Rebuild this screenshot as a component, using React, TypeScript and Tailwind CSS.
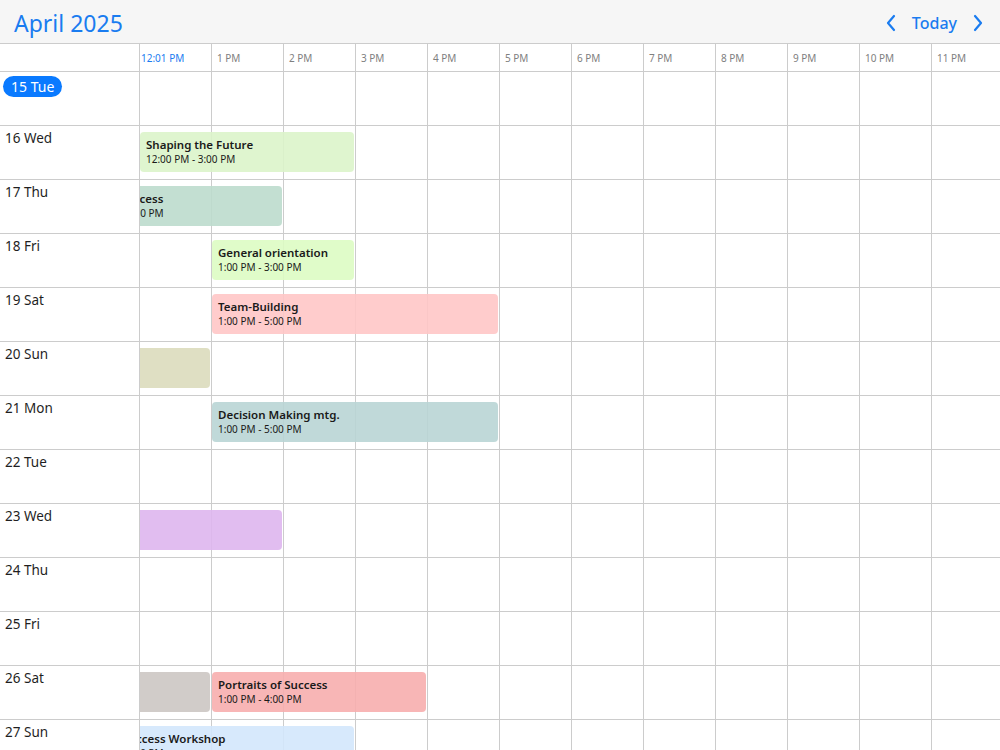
import React from 'react'

type Ev = {
  day: number
  start: number
  end: number
  title?: string
  time?: string
  color: string
}

const HOUR = 72
const GRID_START = 12 // grid scrolled so that 12 PM sits at the left edge

const hours = ['', '1 PM', '2 PM', '3 PM', '4 PM', '5 PM', '6 PM', '7 PM', '8 PM', '9 PM', '10 PM', '11 PM']

const days = [
  { n: 15, d: 'Tue' },
  { n: 16, d: 'Wed' },
  { n: 17, d: 'Thu' },
  { n: 18, d: 'Fri' },
  { n: 19, d: 'Sat' },
  { n: 20, d: 'Sun' },
  { n: 21, d: 'Mon' },
  { n: 22, d: 'Tue' },
  { n: 23, d: 'Wed' },
  { n: 24, d: 'Thu' },
  { n: 25, d: 'Fri' },
  { n: 26, d: 'Sat' },
  { n: 27, d: 'Sun' },
]

// events that start before noon are scrolled out to the left, so only their tail shows
const events: Ev[] = [
  { day: 16, start: 12, end: 15, title: 'Shaping the Future', time: '12:00 PM - 3:00 PM', color: 'bg-[#dcf4ca]/90' },
  { day: 17, start: 11, end: 14, title: 'Road to Success', time: '11:00 AM - 2:00 PM', color: 'bg-[#bddbcd]/90' },
  { day: 18, start: 13, end: 15, title: 'General orientation', time: '1:00 PM - 3:00 PM', color: 'bg-[#ddfcc3]/90' },
  { day: 19, start: 13, end: 17, title: 'Team-Building', time: '1:00 PM - 5:00 PM', color: 'bg-[#ffc7c7]/90' },
  { day: 20, start: 10, end: 13, color: 'bg-[#dcdcbd]/90' },
  { day: 21, start: 13, end: 17, title: 'Decision Making mtg.', time: '1:00 PM - 5:00 PM', color: 'bg-[#b9d5d5]/90' },
  { day: 23, start: 9, end: 14, color: 'bg-[#deb6ee]/90' },
  { day: 26, start: 10, end: 13, color: 'bg-[#ccc7c3]/90' },
  { day: 26, start: 13, end: 16, title: 'Portraits of Success', time: '1:00 PM - 4:00 PM', color: 'bg-[#f7aeae]/90' },
  { day: 27, start: 11, end: 15, title: 'Steps to Success Workshop', time: '11:00 AM - 3:00 PM', color: 'bg-[#d3e7fc]/90' },
]

const Chevron = ({ dir }: { dir: 'left' | 'right' }) => (
  <svg width="12" height="18" viewBox="0 0 12 18" fill="none" stroke="#1a7cf0" strokeWidth="2.2" strokeLinecap="round" strokeLinejoin="round">
    {dir === 'left' ? <polyline points="9,2 3,9 9,16" /> : <polyline points="3,2 9,9 3,16" />}
  </svg>
)

const App = () => {
  return (
    <div
      className="w-[1000px] h-[750px] overflow-hidden flex flex-col bg-white text-[#1f1f1f]"
      style={{ fontFamily: '"Noto Sans", "Open Sans", sans-serif' }}
    >
      {/* header */}
      <div className="h-[44px] shrink-0 flex items-center justify-between bg-[#f6f6f6] border-b border-[#cccccc] pl-[14px] pr-[16px]">
        <h1 className="text-[23px] leading-none text-[#1a7cf0] pt-[4px]">April 2025</h1>
        <div className="flex items-center gap-[15px] pt-[2px]">
          <Chevron dir="left" />
          <span className="text-[16px] font-medium text-[#1a7cf0]">Today</span>
          <Chevron dir="right" />
        </div>
      </div>

      {/* hour labels */}
      <div className="h-[28px] shrink-0 flex border-b border-[#cccccc]">
        <div className="w-[140px] shrink-0 border-r border-[#cccccc]" />
        {hours.map((h, i) => (
          <div key={i} className="w-[72px] shrink-0 border-r border-[#cccccc] pl-[5px] pt-[7px] text-[10px] text-[#808080] whitespace-nowrap">
            {i === 0 ? <span className="text-[#1a7cf0] ml-[-4px]">12:01 PM</span> : h}
          </div>
        ))}
      </div>

      {/* day rows */}
      {days.map((day) => (
        <div key={day.n} className="h-[54px] shrink-0 flex border-b border-[#cccccc]">
          <div className="w-[140px] shrink-0 border-r border-[#cccccc] pt-[2px] pl-[3px]">
            {day.n === 15 ? (
              <span className="inline-flex items-center h-[21px] px-[8px] rounded-full bg-[#0a7aff] text-white text-[14px]">
                {day.n} {day.d}
              </span>
            ) : (
              <div className="pl-[2px] text-[13.5px] leading-[20px]">
                {day.n} {day.d}
              </div>
            )}
          </div>
          <div className="relative flex-1 flex overflow-hidden">
            {hours.map((_, i) => (
              <div key={i} className="w-[72px] shrink-0 border-r border-[#cccccc]" />
            ))}
            {events
              .filter((e) => e.day === day.n)
              .map((e, i) => (
                <div
                  key={i}
                  className={`absolute top-[6px] h-[40px] rounded-[4px] pl-[6px] pt-[5px] overflow-hidden whitespace-nowrap ${e.color}`}
                  style={{ left: (e.start - GRID_START) * HOUR, width: (e.end - e.start) * HOUR - 2 }}
                >
                  {e.title && <div className="text-[11.5px] font-semibold leading-[15px] text-[#1a1a1a]">{e.title}</div>}
                  {e.time && <div className="text-[10px] leading-[14px] text-[#1a1a1a]">{e.time}</div>}
                </div>
              ))}
          </div>
        </div>
      ))}
    </div>
  )
}

export default App
